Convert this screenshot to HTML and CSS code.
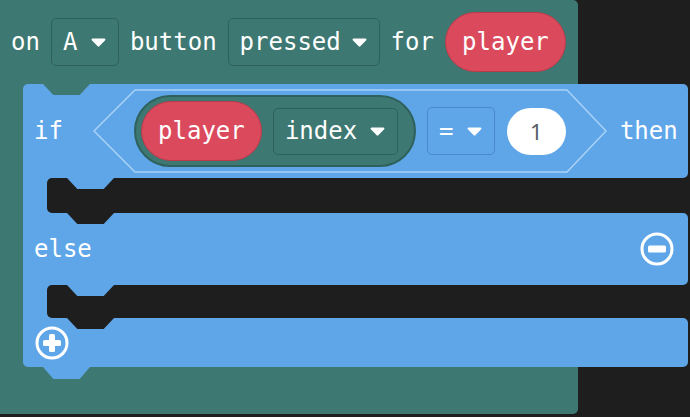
FILE: index.html
```html
<!DOCTYPE html>
<html lang="en">
<head>
    <meta charset="UTF-8">
    <title>on A button pressed</title>
    <link rel="stylesheet" href="styles.css">
</head>
<body>
    <div class="event">
        <div class="event-head">
            <span>on</span>
            <div class="drop drop-a"><span>A</span>
                <svg class="arrow" width="15" height="9" viewBox="0 0 15 9"><path d="M1.6 0.5h11.8a1.1 1.1 0 0 1 0.8 1.8l-5.9 6a1.1 1.1 0 0 1-1.6 0l-5.9-6a1.1 1.1 0 0 1 0.8-1.8z" fill="#fff"/></svg>
            </div>
            <span>button</span>
            <div class="drop drop-pressed"><span>pressed</span>
                <svg class="arrow" width="15" height="9" viewBox="0 0 15 9"><path d="M1.6 0.5h11.8a1.1 1.1 0 0 1 0.8 1.8l-5.9 6a1.1 1.1 0 0 1-1.6 0l-5.9-6a1.1 1.1 0 0 1 0.8-1.8z" fill="#fff"/></svg>
            </div>
            <span>for</span>
            <div class="pill">player</div>
        </div>

        <div class="if-block">
            <div class="row if-row">
                <span>if</span>
                <div class="cond">
                    <svg class="hex" width="514" height="84" viewBox="0 0 514 84"><polygon points="42,1 474,1 513,42 474,83 42,83 1,42" fill="none" stroke="#a9d2f7" stroke-width="1.5"/></svg>
                    <div class="group">
                        <div class="pill">player</div>
                        <div class="drop drop-index"><span>index</span>
                            <svg class="arrow" width="15" height="9" viewBox="0 0 15 9"><path d="M1.6 0.5h11.8a1.1 1.1 0 0 1 0.8 1.8l-5.9 6a1.1 1.1 0 0 1-1.6 0l-5.9-6a1.1 1.1 0 0 1 0.8-1.8z" fill="#fff"/></svg>
                        </div>
                    </div>
                    <div class="drop drop-eq"><span>=</span>
                        <svg class="arrow" width="15" height="9" viewBox="0 0 15 9"><path d="M1.6 0.5h11.8a1.1 1.1 0 0 1 0.8 1.8l-5.9 6a1.1 1.1 0 0 1-1.6 0l-5.9-6a1.1 1.1 0 0 1 0.8-1.8z" fill="#fff"/></svg>
                    </div>
                    <div class="num">1</div>
                </div>
                <span class="then">then</span>
            </div>

            <div class="slot"><div class="arm"></div><div class="hole"></div></div>

            <div class="row else-row">
                <span>else</span>
                <svg class="btn-icon" width="34" height="34" viewBox="0 0 34 34">
                    <circle cx="17" cy="17" r="15" fill="none" stroke="#fff" stroke-width="3"/>
                    <rect x="8" y="13.5" width="18" height="7" rx="1.5" fill="#fff"/>
                </svg>
            </div>

            <div class="slot slot-2"><div class="arm"></div><div class="hole"></div></div>

            <div class="row foot-row">
                <svg class="btn-icon" width="34" height="34" viewBox="0 0 34 34">
                    <circle cx="17" cy="17" r="15" fill="none" stroke="#fff" stroke-width="3"/>
                    <rect x="8" y="14" width="18" height="6" rx="1.5" fill="#fff"/>
                    <rect x="14" y="8" width="6" height="18" rx="1.5" fill="#fff"/>
                </svg>
            </div>
        </div>
    </div>
</body>
</html>
```

FILE: styles.css
```css
body {
    margin: 0;
    width: 690px;
    height: 417px;
    overflow: hidden;
    background: #1e1e1e;
    color: #fff;
    font-family: "DejaVu Sans Mono", monospace;
    font-size: 24px;
}

/* event block (green) */
.event {
    width: 578px;
    padding-bottom: 47px;
    background: #3e7872;
    border-radius: 0 5px 5px 0;
}

.event-head {
    display: flex;
    align-items: center;
    gap: 11px;
    height: 84px;
    padding-left: 11px;
}

.drop {
    display: flex;
    align-items: center;
    justify-content: space-between;
    box-sizing: border-box;
    height: 48px;
    padding: 0 12px 0 11px;
    border: 1.5px solid #2f615c;
    border-radius: 5px;
}

.drop-a {
    width: 68px;
}

.drop-pressed {
    width: 152px;
}

.drop-index {
    width: 125px;
    height: 47px;
}

.drop-eq {
    width: 68px;
    border-color: #4a88cc;
}

.pill {
    display: flex;
    align-items: center;
    justify-content: center;
    box-sizing: border-box;
    width: 121px;
    height: 60px;
    border-radius: 30px;
    background: #db4a5c;
    border: 1px solid #b73c4b;
}

/* if / else block (blue) */
.if-block {
    position: relative;
    width: 665px;
    margin-left: 23px;
}

.if-block::before,
.if-block::after,
.hole::before,
.hole::after {
    content: "";
    position: absolute;
    left: 20px;
    width: 47px;
    height: 11px;
    clip-path: polygon(0 0, 100% 0, 78% 100%, 22% 100%);
}

.if-block::before {
    top: 0;
    background: #3e7872;
    z-index: 1;
}

.if-block::after {
    top: 100%;
    height: 12px;
    background: #5fa6e9;
}

.row {
    display: flex;
    align-items: center;
    padding-left: 11px;
    background: #5fa6e9;
}

.if-row {
    height: 94px;
    border-radius: 5px 5px 5px 0;
}

.cond {
    position: relative;
    display: flex;
    align-items: center;
    gap: 11px;
    box-sizing: border-box;
    width: 514px;
    height: 84px;
    margin-left: 30px;
    padding-left: 41px;
}

.hex {
    position: absolute;
    left: 0;
    top: 0;
}

.group {
    display: flex;
    align-items: center;
    gap: 11px;
    box-sizing: border-box;
    width: 282px;
    height: 72px;
    padding-left: 5px;
    border-radius: 36px;
    background: #3e7872;
    border: 2px solid #2f615c;
}

.num {
    display: flex;
    align-items: center;
    justify-content: center;
    width: 59px;
    height: 47px;
    margin-left: 1px;
    border-radius: 24px;
    background: #fff;
    color: #575e66;
    font-family: "Noto Sans", sans-serif;
    font-size: 22px;
}

.then {
    margin-left: 13px;
}

.slot {
    display: flex;
    height: 35px;
    background: #5fa6e9;
}

.slot-2 {
    height: 33px;
}

.arm {
    width: 24px;
}

.hole {
    position: relative;
    flex: 1;
    background: #1e1e1e;
    border-radius: 5px 0 0 5px;
}

.hole::before {
    top: 0;
    background: #5fa6e9;
}

.hole::after {
    top: 100%;
    background: #1e1e1e;
    z-index: 1;
}

.else-row {
    justify-content: space-between;
    height: 72px;
    padding-right: 14px;
    border-radius: 0 5px 5px 0;
}

.foot-row {
    height: 49px;
    padding-left: 12px;
    border-radius: 0 5px 5px 5px;
}
```
